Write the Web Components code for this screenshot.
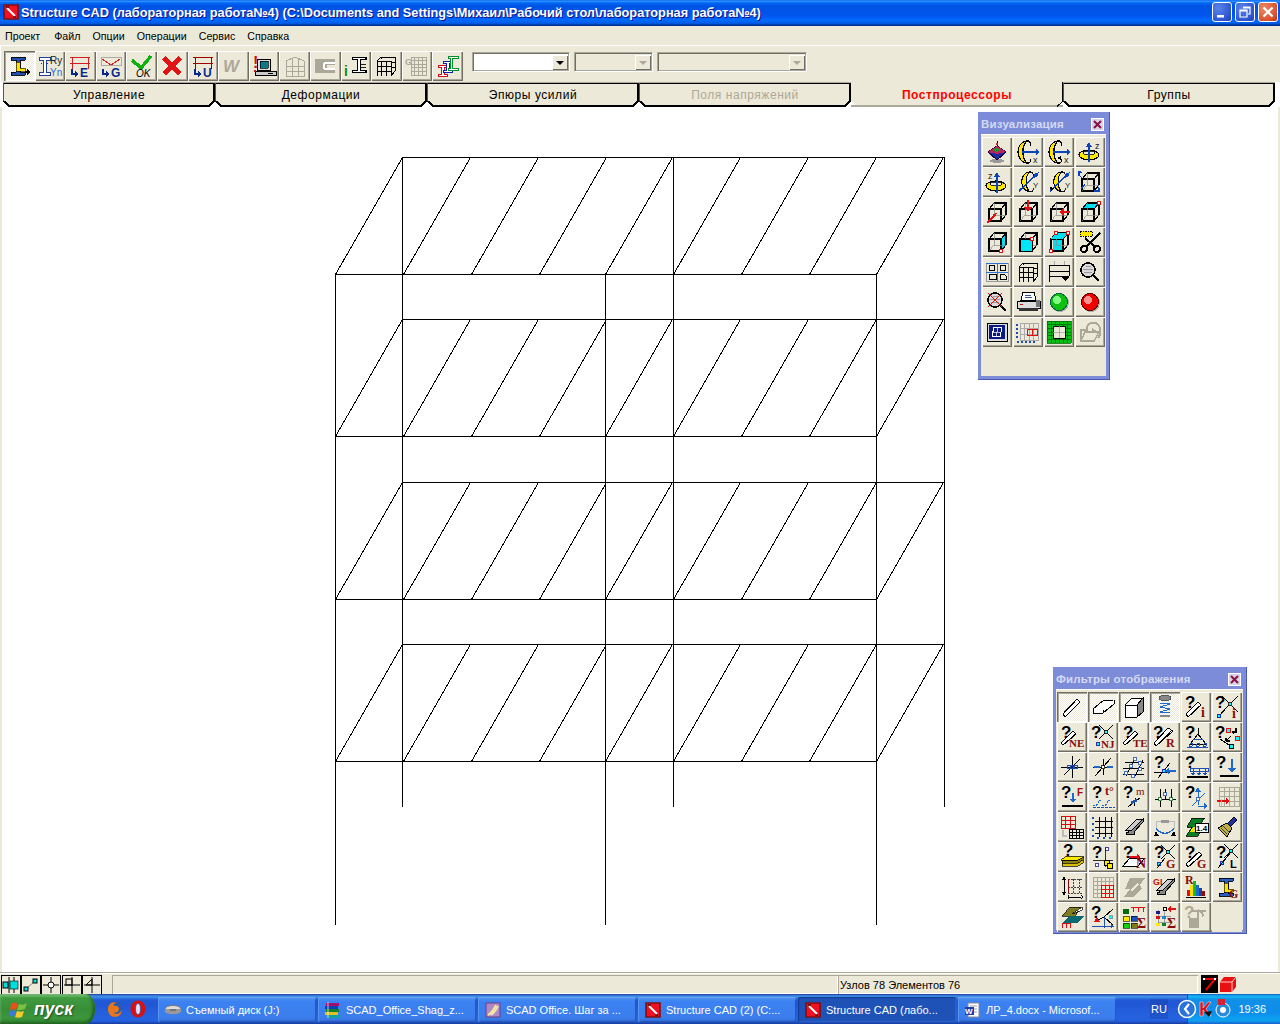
<!DOCTYPE html>
<html lang="ru">
<head>
<meta charset="utf-8">
<title>Structure CAD</title>
<style>
html,body{margin:0;padding:0;background:#ECE9D8;}
body{font-family:"Liberation Sans",Arial,sans-serif;}
</style>
</head>
<body>
<xp-app>
  <xp-titlebar text="Structure CAD (лабораторная работа№4) (C:\Documents and Settings\Михаил\Рабочий стол\лабораторная работа№4)"></xp-titlebar>
  <xp-menubar><span>Проект</span><span>Файл</span><span>Опции</span><span>Операции</span><span>Сервис</span><span>Справка</span></xp-menubar>
  <cad-toolbar>
    <tool-btn icon="t1" pressed></tool-btn><tool-btn icon="t2"></tool-btn><tool-btn icon="t3"></tool-btn><tool-btn icon="t4"></tool-btn><tool-btn icon="t5"></tool-btn><tool-btn icon="t6"></tool-btn><tool-btn icon="t7"></tool-btn><tool-btn icon="t8"></tool-btn><tool-btn icon="t9"></tool-btn><tool-btn icon="t10"></tool-btn><tool-btn icon="t11"></tool-btn><tool-btn icon="t12"></tool-btn><tool-btn icon="t13"></tool-btn><tool-btn icon="t14"></tool-btn><tool-btn icon="t15"></tool-btn>
    <cad-combo w="98" active></cad-combo><cad-combo w="79"></cad-combo><cad-combo w="150"></cad-combo>
  </cad-toolbar>
  <cad-tabs>
    <cad-tab>Управление</cad-tab><cad-tab>Деформации</cad-tab><cad-tab>Эпюры усилий</cad-tab><cad-tab disabled>Поля напряжений</cad-tab><cad-tab active>Постпроцессоры</cad-tab><cad-tab>Группы</cad-tab>
  </cad-tabs>
  <cad-canvas>
    <float-panel heading="Визуализация" cols="4" x="978" y="5" w="132" h="268" icons="v1 v2 v3 v4 v5 v6 v7 v8 v9 v10 v11 v12 v13 v14 v15 v16 v17 v18 v19 v20 v21 v22 v23 v24 v25 v26 v27 v28"></float-panel>
    <float-panel heading="Фильтры отображения" cols="6" x="1053" y="560" w="194" h="267" pressed="4" icons="f1 f2 f3 f4 f5 f6 f7 f8 f9 f10 f11 f12 f13 f14 f15 f16 f17 f18 f19 f20 f21 f22 f23 f24 f25 f26 f27 f28 f29 f30 f31 f32 f33 f34 f35 f36 f37 f38 f39 f40 f41 f42 f43 f44 f45 f46 f47 -"></float-panel>
  </cad-canvas>
  <cad-status text="Узлов 78 Элементов 76"></cad-status>
  <xp-taskbar>
    <task-btn icon="disk">Съемный диск (J:)</task-btn>
    <task-btn icon="rar">SCAD_Office_Shag_z...</task-btn>
    <task-btn icon="book">SCAD Office. Шаг за ...</task-btn>
    <task-btn icon="scad">Structure CAD (2) (C:...</task-btn>
    <task-btn icon="scad" active>Structure CAD (лабо...</task-btn>
    <task-btn icon="word">ЛР_4.docx - Microsof...</task-btn>
  </xp-taskbar>
</xp-app>
<script>
const FF='font-family="Liberation Sans,Arial,sans-serif"',SF='font-family="Liberation Serif,serif"';
const tx=(s,x,y,z=9,c='#000',w=700,extra='')=>`<text x="${x}" y="${y}" font-size="${c==='#8a0c0c'?z+1:z}" font-weight="${w}" fill="${c}" ${c==='#8a0c0c'?SF:FF} ${extra}>${s}</text>`;
const Q=(x=1,y=13,z=17)=>`<text x="${x}" y="${y}" font-size="${z}" font-weight="700" fill="#000" stroke="#fff" stroke-width=".5" paint-order="stroke" ${FF}>?</text>`;
const rod=(d='M7 21l-2-2L18 6l2 2z')=>`<path d="${d}" fill="#fff" stroke="#000" stroke-width="1.2"/>`;
const cross=(x,y,r=6,c='#0ff')=>`<path d="M${x-r} ${y-r}L${x+r} ${y+r}M${x+r} ${y-r}L${x-r} ${y+r}" stroke="#000"/><rect x="${x-1.5}" y="${y-1.5}" width="3" height="3" fill="${c}" stroke="#000" stroke-width=".8"/>`;
const node=(x,y,c='#0ff',s='#00a')=>`<rect x="${x-1.5}" y="${y-1.5}" width="3" height="3" fill="${c}" stroke="${s}" stroke-width=".8"/>`;
const cube=(body='')=>`<path d="M4 9h12v12H4zM4 9l5-6h12v12l-5 6M16 9l5-6" fill="none" stroke="#000" stroke-width="1.1"/><path d="M9 3v12H21M9 15l-5 6" fill="none" stroke="#888" stroke-width=".7"/>${body}`;
const ibeam=(c='#1c4fb0',y='#ffe000')=>`<path d="M4 3h14v3h-5v12h5v3H4v-3h5V6H4z" fill="${c}" stroke="#000" stroke-width=".9"/><path d="M9 8h4v6h5v3H9z" fill="${y}" stroke="#000" stroke-width=".6"/>`;
const arrow=(d,c='#0a46b8',w=1.6)=>`<path d="${d}" fill="none" stroke="${c}" stroke-width="${w}"/>`;
const grid=(x,y,w,h,nx,ny,c='#000',sw=1)=>{let d=`M${x} ${y}h${w}v${h}h${-w}z`;for(let i=1;i<nx;i++)d+=`M${x+w*i/nx} ${y}v${h}`;for(let i=1;i<ny;i++)d+=`M${x} ${y+h*i/ny}h${w}`;return `<path d="${d}" fill="none" stroke="${c}" stroke-width="${sw}"/>`;};
const rot=(tr='')=>`<g transform="${tr}"><path d="M12 1C0 2 0 22 12 23C7 19 6 6 12 1z" fill="#ffe800" stroke="#000" stroke-width="1.200"/><path d="M12 1c3 0 4 2 4 5M12 23c3 0 4-2 4-4" fill="none" stroke="#000"/></g>`;
const ringz=`<ellipse cx="11" cy="15" rx="10" ry="5" fill="#ffe800" stroke="#000" stroke-width="1.200"/><ellipse cx="11" cy="13" rx="6" ry="2" fill="#ece9d8" stroke="#000" stroke-width=".8"/>`;
const frame3d=`<path d="M3 7h14v15M3 7v15M7.500 7v15M12 7v15M3 12h14M3 17h14M3 7l4-4h14v14l-4 5M7 3v2M21 8h-4M21 13h-4" fill="none" stroke="#000" stroke-width="1"/>`;
const glass=(b='')=>`<circle cx="10" cy="10" r="7" fill="#d9d9d9" stroke="#000" stroke-width="1.600"/><path d="M5 9h10M6 12h8M8 6h5" stroke="#999"/><path d="M15 15l6 6" stroke="#000" stroke-width="2.400"/>${b}`;
const ball=(a,b,c)=>`<ellipse cx="13" cy="13" rx="9" ry="9" fill="#888" opacity=".6"/><circle cx="12" cy="12" r="8.500" fill="${b}" stroke="${c}" stroke-width="1"/><circle cx="10" cy="10" r="4" fill="${a}"/>`;
const beam3=`<path d="M4 15l11-11h6l-11 11z" fill="#ccc" stroke="#000"/><path d="M10 15l11-11v3L12 17v2H4v-2h2v-2z" fill="#888" stroke="#000"/>`;
const zshape=(a,b)=>`<path d="M8 3h13l-6 7h6l-7 11H2l6-9H3z" fill="${a}" stroke="#000" stroke-width=".8"/><path d="M9 12h9l-3 5H6z" fill="${b}"/>`;
const dis='#aca899';
const ICONS={
t1:ibeam()+`<path d="M18 18h4" stroke="#000" stroke-width="1.500"/><path d="M20 15l4 3-4 3z"/>`,
t2:`<path d="M1 3h11v3H8v12h4v3H1v-3h4V6H1z" fill="#fff" stroke="#1c3fa0" stroke-width="1"/><path d="M3 9h1M9 9h1" stroke="#1c3fa0"/>`+tx('Ry',12,10,10,'#222',400)+tx('Yn',12,22,10,'#2a6de0',400),
t3:`<path d="M2 3h20M2 9h20M4 3v12M20 3v12" stroke="#d02020" stroke-width="1" fill="none"/>`+arrow('M4 15v5h5','#0a2a8a',2)+`<path d="M7 17l4 3-4 3z" fill="#0a2a8a"/>`+tx('E',12,23,12,'#0a2a8a'),
t4:`<path d="M2 3h20v8H2z" fill="#ece9d8" stroke="#aaa"/><path d="M3 5l9 6 9-6" fill="none" stroke="#d02020"/>`+arrow('M4 15v5h5','#0a2a8a',2)+`<path d="M7 17l4 3-4 3z" fill="#0a2a8a"/>`+tx('G',12,23,12,'#0a2a8a'),
t5:`<path d="M2 6l9 8 10-12" fill="none" stroke="#10b010" stroke-width="3.400"/>`+tx('OK',6,23,10,'#000',400,'font-style="italic"'),
t6:`<path d="M4 4l16 16M20 4L4 20" stroke="#e01414" stroke-width="4.400"/>`,
t7:`<path d="M2 3h20M2 9h20M4 3v12M20 3v12" stroke="#900" stroke-width="1" fill="none"/>`+arrow('M4 15v5h5','#0a2a8a',2)+`<path d="M7 17l4 3-4 3z" fill="#0a2a8a"/>`+tx('U',12,23,12,'#0a2a8a'),
t8:tx('W',2,18,17,dis,700,'font-style="italic"'),
t9:tx('!',1,14,16,'#d01010')+`<path d="M5 5h13v11H5z" fill="#ddd" stroke="#000"/><path d="M8 7h8v7H8z" fill="#087a8a" stroke="#000" stroke-width=".7"/><path d="M3 17h21v4H3z" fill="#ccc" stroke="#000"/><path d="M16 19h5" stroke="#000"/><circle cx="3" cy="17" r="1.500" fill="#d01010"/>`,
t10:`<path d="M3 7l9-4 9 4v15H3zM3 12h18M3 17h18M9 4v18M15 4v18" fill="none" stroke="${dis}" stroke-width="1"/>`,
t11:`<path d="M2 5h20v14H2z" fill="${dis}"/><path d="M11 9h11M11 15h11M11 9v6" stroke="#fff" fill="none" stroke-width="2"/><path d="M14 11h8v3h-8z" fill="#ece9d8"/>`,
t12:tx('i',0,22,14,'#0a9010')+`<g transform="translate(5 0) scale(.85)"><path d="M4 4h16v3h-6v12h6v3H4v-3h6V7H4z" fill="#fff" stroke="#000" stroke-width="1.200"/><path d="M14 12h6M14 16h6" stroke="#000"/></g>`,
t13:frame3d,
t14:tx('G',0,11,9,dis)+grid(6,3,15,18,4,5,dis,1),
t15:`<path d="M2 11h9v2H8v7h3v2H2v-2h3v-7H2z" fill="#fff" stroke="#d01020" stroke-width="1"/><path d="M7 7h9v2h-3v7h3v2H7v-2h3V9H7z" fill="#fff" stroke="#1020b0" stroke-width="1"/><path d="M12 2h10v2h-6v10h6v2H12v-2h2V4h-2z" fill="#fff" stroke="#009030" stroke-width="1"/>`,
v1:`<ellipse cx="12" cy="21" rx="7" ry="2" fill="#999"/><path d="M12 1v6" stroke="#000"/><path d="M3 12l9-6 9 6-9 8z" fill="#1c2aa0" stroke="#203"/><path d="M3 12l9-6 9 6-9 2z" fill="#c02060"/><path d="M8 10l4-2 4 2-4 2z" fill="#10a020"/><circle cx="12" cy="4" r="1.500" fill="#d02020"/>`,
v2:rot('translate(-1 0)')+arrow('M6 12h17')+`<path d="M20 9l4 3-4 3z" fill="#0a46b8"/>`+tx('x',17,23,9,'#222',400),
v3:rot('translate(-1 0)')+arrow('M6 12h17')+`<path d="M20 9l4 3-4 3z" fill="#0a46b8"/>`+tx('x',17,23,9,'#222',400)+`<path d="M10 18l4 2v-4z"/>`,
v4:ringz+arrow('M11 22V5')+`<path d="M8 7l3-5 3 5z" fill="#0a46b8"/>`+tx('z',17,9,9,'#222',400),
v5:`<g transform="translate(0 1)">${ringz}</g>`+arrow('M12 23V5')+`<path d="M9 7l3-5 3 5z" fill="#0a46b8"/>`+tx('z',3,9,9,'#222',400),
v6:rot('translate(3 1) scale(.9)')+arrow('M3 21L20 5')+`<path d="M23 2l-2 6-4-4z" fill="#0a46b8"/>`+tx('Y',17,18,8,'#222',400),
v7:rot('translate(4 1) scale(.9)')+arrow('M3 21L20 5')+`<path d="M23 2l-2 6-4-4z" fill="#0a46b8"/>`+tx('Y',18,18,8,'#222',400)+`<path d="M3 17l4 1-3 3z"/>`,
v8:cube(arrow('M1 5l3 3M1 1v5','#0a46b8',1.2)+arrow('M7 14l-4 5M16 21h6','#0a46b8',1.2)+`<path d="M2 0l2 3H0zM23 19l-3-2v4z" fill="#0a46b8"/>`),
v9:cube(`<path d="M2 23l8-8" stroke="#e01010" stroke-width="1.600"/><path d="M12 13l-5 1 3 3z" fill="#e01010"/>`),
v10:cube(`<path d="M12 0v9" stroke="#e01010" stroke-width="1.800"/><path d="M8 7h8l-4 5z" fill="#e01010"/>`),
v11:cube(`<path d="M23 12h-8" stroke="#e01010" stroke-width="1.800"/><path d="M17 8v8l-5-4z" fill="#e01010"/>`),
v12:`<path d="M4 9l5-6h12l-5 6z" fill="#00e0f0"/>`+cube(`<rect x="19.500" y="1.500" width="3" height="3" fill="#fff" stroke="#e01010"/>`),
v13:`<path d="M16 9l5-6v12l-5 6z" fill="#00e0f0"/>`+cube(`<rect x="14.500" y="19.500" width="3" height="3" fill="#fff" stroke="#e01010"/>`),
v14:`<path d="M4 9h12v12H4z" fill="#00e0f0"/>`+cube(`<path d="M4 9h12v12H4z" fill="#00e8f8" stroke="#000" stroke-width="1"/><rect x="14.500" y="7.500" width="3" height="3" fill="#fff" stroke="#e01010"/>`),
v15:`<path d="M6 8L11 3h10l-6 6v12H6z" fill="#00e0f0"/>`+cube(`<path d="M9 3h12l-5 6H4z" fill="#00e0f0"/><rect x="7.500" y="1.500" width="3" height="3" fill="#fff" stroke="#e01010"/><rect x="19.500" y="1.500" width="3" height="3" fill="#fff" stroke="#e01010"/><rect x="2.500" y="19.500" width="3" height="3" fill="#fff" stroke="#e01010"/>`),
v16:`<path d="M2 1h12v5H2z" fill="#ffe800" stroke="#000" stroke-dasharray="1.500 1"/><path d="M22 3L8 17M7 8l10 9" stroke="#000" stroke-width="2"/><circle cx="6" cy="19" r="3" fill="none" stroke="#000" stroke-width="2"/><circle cx="19" cy="19" r="3" fill="none" stroke="#000" stroke-width="2"/>`,
v17:`<path d="M1 3h22v18H1z" fill="none" stroke="#999"/><path d="M1 3h22M12 3v18M1 12h22" stroke="#3070d0" stroke-width="1"/><path d="M4 5h5v5H4zM15 5h5v5h-5zM4 14h7v5H4zM15 14h4l2 2v3h-6z" fill="none" stroke="#000"/>`,
v18:frame3d,
v19:`<path d="M7 1v4M17 1v4" stroke="#aaa"/><path d="M2 5h20v6H2zM2 16h20M2 5v17M22 5v11" fill="none" stroke="#000" stroke-width="1"/><path d="M14 17h8l-4 4z"/>`,
v20:glass(),
v21:glass(`<path d="M3 3l14 14M17 3L3 17" stroke="#e01010" stroke-width="1.300"/>`),
v22:`<path d="M7 2h11l2 8H5z" fill="#fff" stroke="#000"/><path d="M9 5h6M9 7h7" stroke="#3050a0"/><path d="M1 11h23v7H1z" fill="#ddd" stroke="#000"/><path d="M20 10h4v7h-4z" fill="#777"/><path d="M3 18h19v3H3z" fill="#333"/><path d="M4 14h3" stroke="#d01010"/>`,
v23:ball('#80ff80','#10c010','#064'),
v24:ball('#ff9090','#ee0000','#600'),
v25:`<path d="M2 3h20v18H2z" fill="#ddd" stroke="#000" stroke-width="1"/><path d="M4 5h16v14H4z" fill="#0a1a80"/><path d="M7 16l2-9 8 1-2 9z" fill="none" stroke="#fff"/><path d="M8 12l8 1M13 7l-2 9" stroke="#fff" stroke-width=".7"/>`,
v26:grid(4,3,18,17,4,3,'#aaa')+`<path d="M11 9h10v6H11z M16 9v6" fill="none" stroke="#e01010" stroke-width="1"/>`+`<path d="M1 4v16M1 22h20" stroke="#1c4fb0" stroke-dasharray="1.500 2.500" stroke-width="1.500"/>`,
v27:`<path d="M0 1h24v22H0z" fill="#00c010"/>`+grid(0,1,24,22,6,6,'#006a0a',.8)+`<path d="M6 6h12v12H6z" fill="#ece9d8" stroke="#000" stroke-width="1"/><path d="M12 6v12M6 12h12" stroke="#999" stroke-width=".7"/>`,
v28:`<path d="M3 21V10h6V8c0-7 13-7 13 1v6l-2 3" fill="none" stroke="${dis}" stroke-width="2"/><path d="M3 21l4-9h14l-5 9z" fill="#ece9d8" stroke="${dis}" stroke-width="1.500"/><path d="M14 9l4 3" stroke="${dis}" stroke-width="2"/>`,
f1:rod('M5 22l-2-3L17 4l3 3z')+`<path d="M3 19l2 3" stroke="#000"/>`,
f2:`<path d="M2 14L13 5h10L12 15H2z" fill="#fff" stroke="#000" stroke-width="1"/><path d="M2 14v4h10l11-9V5M12 15v3" fill="#fff" stroke="#000" stroke-width="1"/>`,
f3:`<path d="M3 10L10 3h11v14l-6 5H3z" fill="#fff" stroke="#000" stroke-width="1"/><path d="M15 10l6-7v14l-6 5z" fill="#888" stroke="#000"/><path d="M3 10h12v12" fill="none" stroke="#000" stroke-width="1"/>`,
f4:`<ellipse cx="12" cy="3" rx="6" ry="2.500" fill="#888" stroke="#555"/><path d="M7 8l10 1-10 3 10 2-10 3 10 1" fill="none" stroke="#1c6ad0" stroke-width="1"/><path d="M7 21h10" stroke="#888" stroke-width="2"/>`,
f5:Q()+rod('M4 22l-2-3L14 7l3 3z')+tx('i',17,22,13,'#8a0c0c'),
f6:Q(0)+cross(15,9,8)+`<path d="M5 20l7-8" stroke="#000"/>`+node(4,21)+tx('i',17,23,13,'#8a0c0c'),
f7:Q()+rod('M3 20l-2-2L13 6l3 3z')+tx('NE',9,22,10,'#8a0c0c'),
f8:Q(0)+cross(15,7,7)+node(7,19)+tx('NJ',10,23,10,'#8a0c0c'),
f9:Q()+rod('M3 20l-2-2L13 6l3 3z')+tx('TE',11,22,10,'#8a0c0c'),
f10:Q(0)+`<path d="M3 21l-2-3L15 3l5 3z" fill="#fff" stroke="#000" stroke-width="1"/><path d="M3 21l15-15" stroke="#000"/>`+tx('R',13,22,11,'#8a0c0c'),
f11:Q()+`<path d="M14 3v8M14 9l-8 10h16z" fill="none" stroke="#000"/>`+`<path d="M9 14h10" stroke="#1c4fb0"/><path d="M3 22h21" stroke="#1c4fb0"/>`+`<circle cx="7" cy="20" r="1.500" fill="none" stroke="#1c4fb0"/><circle cx="21" cy="20" r="1.500" fill="none" stroke="#1c4fb0"/><circle cx="14" cy="20" r="1.500" fill="none" stroke="#1c4fb0"/>`,
f12:Q(0)+`<rect x="11" y="3" width="4" height="4" fill="#0ff" stroke="#e01010"/><rect x="20" y="11" width="4" height="4" fill="#0ff" stroke="#e01010"/><rect x="14" y="19" width="4" height="4" fill="#0ff" stroke="#000"/><path d="M18 9l4-5M21 3v4h-4M12 15l4-4M11 16v-3M11 16h4" stroke="#000" fill="none" stroke-width="1.200"/><path d="M5 14l9 6" stroke="#000"/>`,
f13:`<path d="M1 12h22M12 1v22M4 20L20 4" stroke="#000"/>`+node(12,12,'#0a1a90','#1c4fb0')+`<rect x="7" y="10" width="3" height="3" fill="none" stroke="#1c4fb0"/><rect x="14" y="10" width="3" height="3" fill="none" stroke="#1c4fb0"/>`,
f14:`<path d="M2 12h20M4 21L20 3M12 4v16" stroke="#000"/><path d="M3 12h6M16 12h6" stroke="#1c6ad0" stroke-width="2.500"/>`+node(12,12,'#fff','#000'),
f15:`<path d="M3 7h19M1 13h21M1 19h21M4 21L12 5M13 21L21 5" stroke="#000" fill="none"/>`+node(13,4,'#fff','#1c4fb0')+node(18,8,'#fff','#1c4fb0')+node(9,11,'#fff','#1c4fb0')+node(18,14,'#fff','#1c4fb0')+node(4,18,'#fff','#1c4fb0')+node(11,21,'#fff','#1c4fb0'),
f16:Q()+`<path d="M1 17h16M5 23L17 8" stroke="#000"/>`+node(11,16)+arrow('M23 16h-9','#1c6ad0',2)+`<path d="M16 13v6l-4-3z" fill="#1c6ad0"/>`,
f17:Q()+`<path d="M6 13h18v3H6z" fill="none" stroke="#1c4fb0"/><path d="M9 14v5M15 14v5M21 14v5" stroke="#1c4fb0" stroke-width="1"/><path d="M7 18h4l-2 3zM13 18h4l-2 3zM19 18h4l-2 3z" fill="#1c4fb0"/><path d="M3 22h21" stroke="#000" stroke-width="2"/>`,
f18:Q()+arrow('M17 4v12','#1c6ad0',2)+`<path d="M13 13h8l-4 5z" fill="#1c6ad0"/><path d="M5 21h19" stroke="#000" stroke-width="2"/>`,
f19:Q()+arrow('M13 8v9','#1c6ad0',2)+`<path d="M10 14h6l-3 4z" fill="#1c6ad0"/>`+tx('F',17,11,10,'#a01010')+`<path d="M2 21h21" stroke="#000" stroke-width="2"/>`,
f20:Q()+tx('t°',14,10,11,'#8a0c0c')+`<path d="M2 21c6 0 4-4 8-6M11 21c6 0 4-4 8-6" stroke="#1c6ad0" fill="none" stroke-dasharray="2 1"/><path d="M2 22h22" stroke="#1c4fb0" stroke-dasharray="3 1"/>`,
f21:Q()+tx('m',14,10,10,'#8a0c0c',400)+`<path d="M6 22l12-9M14 13l-2 8" stroke="#000"/><path d="M9 18l6-3" stroke="#1c4fb0" stroke-width="3"/>`,
f22:`<path d="M7 4v18M18 4v18M2 14h21M12 4v10" stroke="#000"/>`+node(12,9,'#fff','#1c4fb0')+node(7,14,'#fff','#0a7a20')+node(18,14,'#fff','#0a7a20'),
f23:Q()+arrow('M8 21L21 8M14 7v13M14 21h9','#1c6ad0',1)+`<path d="M14 2l3 5h-6zM24 21l-4-3v6z" fill="#1c6ad0"/>`+node(14,14,'#fff','#1c4fb0'),
f24:grid(4,2,20,19,4,4,dis)+`<path d="M2 16h11" stroke="#e01010" stroke-width="1.500"/><path d="M11 13l4 3-4 3z" fill="#e01010"/><path d="M6 21v-7" stroke="#e8d000"/>`,
f25:grid(1,1,14,12,3,3,'#d01010',1)+`<path d="M3 15v6h4" stroke="#bbb" stroke-width="2.500" fill="none"/>`+grid(9,14,14,9,4,3,'#000',1),
f26:`<path d="M4 6h18M4 12h18M4 18h18M8 2v20M14 2v20M20 2v20" stroke="#000"/>`+`<path d="M2 2v20" stroke="#1c4fb0" stroke-dasharray="1.500 4.500" stroke-width="1.800"/><path d="M6 23h16" stroke="#1c4fb0" stroke-dasharray="2 4" stroke-width="1.500"/>`,
f27:beam3,
f28:`<path d="M3 6h18M3 6v8M21 6v8" stroke="#bbb" stroke-width="1" fill="none"/><path d="M8 6h8" stroke="#999" stroke-width="3"/><path d="M3 13c5 7 13 7 18 0" stroke="#1c6ad0" stroke-width="1.300" fill="none"/><path d="M1 21l2-5 3 5zM18 21l3-5 2 5z" fill="#000"/>`,
f29:zshape('#088020','#f0e000')+`<path d="M11 8h13v9H11z" fill="#fff" stroke="#000"/>`+tx('1.4',12,16,8,'#000',700),
f30:`<path d="M19 2l3 3-7 7-3-3z" fill="#2030a0" stroke="#000"/><path d="M12 8l5 5-5 9-9-9z" fill="#c0b040" stroke="#000"/><path d="M6 13l6 6M8 11l6 6" stroke="#444"/>`,
f31:Q(3,11)+`<path d="M2 15h16l5-3v3l-5 3H2z" fill="#908010" stroke="#000" stroke-width=".7"/><path d="M2 18h16l5-3v3l-5 3H2z" fill="#d8c000" stroke="#000" stroke-width=".7"/><path d="M6 11h14l4 1-6 3H1z" fill="#ffe800" stroke="#000" stroke-width=".7"/>`,
f32:Q(1)+`<path d="M2 15h20M14 2v20" stroke="#000" stroke-width=".8"/>`+node(16,4,'#fff','#1c1c90')+node(6,20,'#fff','#1c1c90')+`<rect x="13" y="15" width="5" height="5" fill="#ffe800" stroke="#000"/><rect x="16" y="18" width="5" height="5" fill="#ffe800" stroke="#000"/>`,
f33:Q(1)+`<path d="M1 21l7-8h15l-7 8z" fill="#fff" stroke="#000"/><path d="M7 12h11" stroke="#e01010" stroke-width="1.300"/><path d="M15 9v6l4-3z" fill="#e01010"/>`+tx('N',14,23,13,'#8a0c0c'),
f34:Q(1)+cross(15,7,7)+node(6,19)+`<path d="M4 23l8-10" stroke="#000"/>`+tx('G',13,23,11,'#8a0c0c'),
f35:Q(1)+rod('M4 22l-2-3L15 7l3 3z')+tx('G',13,23,11,'#8a0c0c'),
f36:Q(1)+cross(16,6,7)+node(7,18)+`<path d="M3 23l13-16" stroke="#000"/>`+tx('L',15,23,11,'#000'),
f37:`<path d="M8 4h15M8 12h15M8 18h15M13 4v14M19 4v14" stroke="#444" stroke-dasharray="2 1"/><path d="M8 4v14" stroke="#8a0c0c"/>`+arrow('M4 3v16','#000',1)+`<path d="M2 5l2-4 2 4zM2 17l2 4 2-4z"/><path d="M8 22h13M21 20l2 2-2 2M8 20v4" stroke="#000" fill="none"/>`,
f38:grid(2,2,20,20,5,5,dis)+grid(10,10,12,12,3,3,'#e01010',1),
f39:`<path d="M8 3h15l-5 7 2 4-9 8H2l6-8H3z" fill="${dis}"/><path d="M9 16l7-7" stroke="#ece9d8" stroke-width="2"/>`,
f40:tx('GL',0,10,9,'#c01010')+beam3,
f41:tx('R',1,9,11,'#8a0c0c')+`<path d="M2 22h20" stroke="#000" stroke-width="1"/><path d="M3 15h3v6H3z" fill="#e01010"/><path d="M6 10h3v11H6z" fill="#ffe000"/><path d="M9 6h3v15H9z" fill="#10c010"/><path d="M12 10h3v11h-3z" fill="#1c6ad0"/><path d="M15 13h3v8h-3z" fill="#1c3fa0"/><path d="M18 16h3v5h-3z" fill="#8a0c0c"/>`,
f42:ibeam('#2a60c0','#ffe000')+tx('G',14,23,11,'#8a0c0c'),
f43:`<path d="M2 11L10 2h12l-7 9z" fill="#807c20" stroke="#000" stroke-width=".7"/><path d="M10 11h14l-6 7H2z" fill="#086a70"/><path d="M12 9l10-7v3z" fill="#fff" stroke="#000" stroke-width=".7"/><path d="M2 18h8v5M2 18v5M6 18v5" stroke="#e01010" fill="none" stroke-width="1"/>`,
f44:Q(0)+`<path d="M3 17l10-5 9-8M13 12l9 8" stroke="#000" fill="none"/>`+node(20,12,'#0ff','#888')+`<path d="M3 17h6l-3-5z" fill="#e01010"/><path d="M1 21h22M13 12v11" stroke="#1c4fb0"/><path d="M20 19l3 2-3 2z" fill="#1c4fb0"/>`,
f45:`<rect x="1" y="4" width="6" height="5" fill="#0a6a0a"/><rect x="1" y="11" width="6" height="5" fill="#ffe800" stroke="#000" stroke-width=".6"/><rect x="1" y="18" width="6" height="5" fill="#10d010" stroke="#000" stroke-width=".6"/><rect x="9" y="11" width="6" height="5" fill="#1c4fc0" stroke="#000" stroke-width=".6"/><rect x="9" y="18" width="6" height="5" fill="#807c20" stroke="#000" stroke-width=".6"/><path d="M9 2h14M11 2v5M16 2v5M21 2v5" stroke="#e01010"/>`+tx('Σ',15,23,13,'#8a0c0c'),
f46:`<path d="M5 5v16M5 11h13M5 17h13M11 5v16" stroke="#888" stroke-width=".8"/><rect x="3" y="6" width="4" height="3" fill="#1c1c90"/><rect x="3" y="11" width="4" height="3" fill="#e01010"/><rect x="3" y="18" width="4" height="3" fill="#ffe800"/><rect x="9" y="11" width="4" height="3" fill="#1c8ad0"/><rect x="9" y="18" width="4" height="3" fill="#108030"/><circle cx="12" cy="4" r="2" fill="#fff" stroke="#000"/><path d="M23 4h-8" stroke="#e01010" stroke-width="2"/><path d="M18 1v6l-4-3z" fill="#e01010"/>`+tx('Σ',14,23,13,'#8a0c0c'),
f47:`<text x="0" y="13" font-size="17" font-weight="700" fill="${dis}" ${FF}>?</text>`+`<path d="M5 13h10v10H5z" fill="${dis}"/><path d="M14 23V5M7 6h15M14 5l6 5" stroke="${dis}" stroke-width="1.500" fill="none"/><path d="M18 7v5" stroke="${dis}"/>`,
disk:`<ellipse cx="8" cy="7" rx="8" ry="3.500" fill="#ddd" stroke="#777"/><path d="M0 7v3c2 3 14 3 16 0V7" fill="#999"/><path d="M5 8h6" stroke="#555"/>`,
rar:`<path d="M1 1h13v3H1z" fill="#a01070"/><path d="M0 4h13v3H0z" fill="#1040b0"/><path d="M1 7h13v3H1z" fill="#108030"/><path d="M0 10h13v3H0z" fill="#e0c020"/><path d="M2 13h12v3H2z" fill="#10a0a0"/><path d="M3 0v16" stroke="#fff" stroke-width=".7"/>`,
book:`<path d="M1 1h14v14H1z" fill="#b088c8" stroke="#6a4080"/><path d="M3 13C7 11 9 7 11 3M6 13c3-2 5-5 7-9" stroke="#f0e8a0" stroke-width="2" fill="none"/>`,
scad:`<path d="M1 1h14v14H1z" fill="#f01020" stroke="#801010" stroke-width="1.600"/><path d="M4 4l8 8" stroke="#fff" stroke-width="2"/><path d="M3 3h3M10 13h3" stroke="#000"/>`,
word:`<path d="M3 1h11v14H3z" fill="#fff" stroke="#889"/><path d="M5 4h7M5 7h7M5 10h7" stroke="#99b"/><path d="M0 5h9v8H0z" fill="#2040a0"/>`+tx('W',0,12,8,'#fff'),
};
const sv=(b,s=24,crisp=false)=>`<svg xmlns="http://www.w3.org/2000/svg" width="${s}" height="${s}" viewBox="0 0 ${s} ${s}" ${crisp?'shape-rendering="crispEdges" stroke-width="1"':''} style="display:block;overflow:visible">${b}</svg>`;
class Base extends HTMLElement{
  constructor(){super();this.attachShadow({mode:'open'});}
  html(h){this.shadowRoot.innerHTML=h;}
}
class XpApp extends Base{connectedCallback(){this.html(`<style>:host{display:flex;flex-direction:column;width:1280px;height:1024px;overflow:hidden;background:#ECE9D8;font-family:"Liberation Sans",Arial,sans-serif}</style><slot></slot>`);}}
class XpTitlebar extends Base{connectedCallback(){
  const t=this.getAttribute('text');
  this.html(`<style>
  :host{display:flex;align-items:center;height:26px;flex:none;box-sizing:border-box;padding:0 2px 2px 3px;color:#fff;
  background:linear-gradient(180deg,#0058EE 0,#3593FF 4%,#288EFF 6%,#127DFF 8%,#036FFC 10%,#0262EE 14%,#0057E5 20%,#0054E3 24%,#0055EB 56%,#005BF5 66%,#026AFE 76%,#0062EF 86%,#0052D6 92%,#0040AB 94%,#003092 100%)}
  .t{font:700 12.75px "Liberation Sans",Arial,sans-serif;margin-left:2px;flex:1;white-space:nowrap;text-shadow:1px 1px #0f1089}
  .b{width:20px;height:20px;box-sizing:border-box;border:1px solid #fff;border-radius:3px;margin-left:3px;background:radial-gradient(circle at 30% 30%,#5b83ea,#2f56d0 70%,#1f3fa8);display:flex;align-items:center;justify-content:center}
  .c{background:radial-gradient(circle at 30% 30%,#ea8a6a,#d8522c 70%,#b03010)}
  </style>
  ${sv(ICONS.scad,16)}<span class="t"></span>
  <div class="b">${sv('<path d="M3 11h7v2.500H3z" fill="#fff"/>',16)}</div>
  <div class="b">${sv('<path d="M6 3h7v7h-2M3 6h7v7H3z M3 7h7M6 4h7" fill="none" stroke="#fff" stroke-width="1.200"/>',16)}</div>
  <div class="b c">${sv('<path d="M3.500 3.500l9 9M12.500 3.500l-9 9" stroke="#fff" stroke-width="2.200"/>',16)}</div>`);
  this.shadowRoot.querySelector('.t').textContent=t;
}}
class XpMenubar extends Base{connectedCallback(){this.html(`<style>
  :host{display:flex;align-items:center;height:19px;flex:none;padding-left:5px;gap:12px;background:#ECE9D8;font:10.7px "Liberation Sans",Arial,sans-serif;color:#000;border-bottom:1px solid #fff}
  ::slotted(span){display:block}
  ::slotted(span:first-child){margin-right:2px}
  </style><slot></slot>`);}}
class CadToolbar extends Base{connectedCallback(){this.html(`<style>
  :host{display:flex;align-items:flex-start;height:36px;flex:none;box-sizing:border-box;padding:5px 0 0 3px;background:#ECE9D8;border-left:1px solid #fff}
  ::slotted(tool-btn){flex:0 0 30.6px}
  ::slotted(cad-combo){margin:1px 4px 0 0}
  ::slotted(cad-combo[active]){margin-left:9px}
  </style><slot></slot>`);}}
class ToolBtn extends Base{connectedCallback(){
  const ic=this.getAttribute('icon');
  this.html(`<style>
  :host{display:flex;align-items:center;justify-content:center;width:30px;height:30px;box-sizing:border-box;background:#ECE9D8;
  box-shadow:inset 1px 1px 0 #fff,inset -1px -1px 0 #716F64,inset -2px -2px 0 #ACA899}
  :host([pressed]){box-shadow:inset 1px 1px 0 #716F64,inset 2px 2px 0 #ACA899,inset -1px -1px 0 #fff;
  background:repeating-conic-gradient(#ECE9D8 0 25%,#fff 0 50%) 0 0/2px 2px}
  :host([flat]){box-shadow:none}
  </style>${ic&&ic!=='-'?sv(ICONS[ic]||'',24,true):''}`);
}}
class CadCombo extends Base{connectedCallback(){
  const a=this.hasAttribute('active'),w=this.getAttribute('w');
  this.html(`<style>
  :host{display:flex;width:${w}px;height:20px;flex:none;box-sizing:border-box;border:1px solid #fff;box-shadow:inset 1px 1px 0 #716F64,inset -1px -1px 0 #ACA899;background:${a?'#fff':'#ECE9D8'};padding:2px 1px 1px 2px;justify-content:flex-end;border-top-color:#ACA899;border-left-color:#ACA899}
  .a{width:16px;box-sizing:border-box;background:#ECE9D8;box-shadow:inset 1px 1px 0 #fff,inset -1px -1px 0 #716F64;display:flex;align-items:center;justify-content:center}
  .a i{width:0;height:0;border:4px solid transparent;border-top:4px solid ${a?'#000':'#ACA899'};border-bottom:0}
  </style><div class="a"><i></i></div>`);
}}
class CadTabs extends Base{connectedCallback(){this.html(`<style>:host{display:flex;height:25px;flex:none;padding-left:3px;background:#fff}</style><slot></slot>`);}}
class CadTab extends Base{connectedCallback(){
  const act=this.hasAttribute('active'),dis_=this.hasAttribute('disabled');
  const bd=act?`<path d="M0 0H212V19L206.500 24.500H5.500L0 19Z" fill="#ECE9D8"/><path d="M0 23.500H212" stroke="#ACA899" stroke-width="2"/><path d="M211.500 0V20" stroke="#000"/><path d="M206 24.500L212 19" stroke="#000"/>`
   :`<path d="M0 0H212V19L206.500 24.500H5.500L0 19Z" fill="#ECE9D8"/><path d="M0 .5H212" stroke="#ACA899"/><path d="M0 1.500H212" stroke="#000"/><path d="M211 1V19.500L206 24H6L0.500 19" fill="none" stroke="#000" stroke-width="2"/><path d="M.5 1V19" stroke="#555"/>`;
  this.html(`<style>
  :host{display:block;position:relative;width:212px;height:25px;flex:none}
  svg{position:absolute;left:0;top:0}
  .l{position:relative;display:flex;height:25px;box-sizing:border-box;padding-top:1px;align-items:center;justify-content:center;font:12px "Liberation Sans",Arial,sans-serif;letter-spacing:.55px;color:${dis_?'#ACA899':act?'#f00':'#000'};font-weight:${act?700:400}}
  </style><svg width="212" height="25" viewBox="0 0 212 25" shape-rendering="crispEdges">${bd}</svg><div class="l"><slot></slot></div>`);
}}
class CadCanvas extends Base{connectedCallback(){
  const F=[274,436,599,761].map(v=>v+.5),B=[157,319,482,644].map(v=>v+.5);
  const fx=[335,403,471,539,605,673,741,809,876],dx=67;
  let d='';
  for(const x of [335,605,876])d+=`M${x+.5} 274.5V925`;
  for(const x of [402,673,944])d+=`M${x+.5} 157.5V807`;
  F.forEach((y,i)=>{d+=`M335 ${y}H877`;});
  B.forEach((y,i)=>{d+=`M402 ${y}H945`;
    fx.forEach(x=>{d+=`M${x+.5} ${F[i]}L${x+dx+.5} ${y}`;});
  });
  this.html(`<style>
  :host{display:block;position:relative;flex:1;min-height:0;background:#fff;box-shadow:inset 2px 0 0 #ECE9D8,inset -2px 0 0 #ECE9D8}
  svg{position:absolute;left:0;top:0}
  </style><svg width="1280" height="865" viewBox="0 107 1280 865" shape-rendering="crispEdges"><path d="${d}" fill="none" stroke="#000"/></svg><slot></slot>`);
}}
class FloatPanel extends Base{connectedCallback(){
  const a=n=>this.getAttribute(n);
  const ics=a('icons').split(' '),pr=+(a('pressed')||0);
  const btns=ics.map((n,i)=>n==='-'?`<tool-btn icon="-" flat></tool-btn>`:`<tool-btn icon="${n}"${i<pr?' pressed':''}></tool-btn>`).join('');
  this.html(`<style>
  :host{display:block;position:absolute;left:${a('x')}px;top:${a('y')}px;width:${a('w')}px;height:${a('h')}px;box-sizing:border-box;background:#ECE9D8;border:1px solid #4A5AB0;border-width:0 1px 1px 0;box-shadow:inset 0 0 0 3px #7C8CD8;padding:3px}
  .h{display:flex;align-items:center;padding-bottom:1px;box-sizing:border-box;height:20px;background:#7C8CD8;color:#D4DAF4;font:700 11.5px "Liberation Sans",Arial,sans-serif;letter-spacing:.2px;justify-content:space-between;border-bottom:1px solid #fff}
  .x{width:13px;height:13px;box-sizing:border-box;margin-right:2px;background:#D8D4E8;border:1px solid #fff;display:flex;align-items:center;justify-content:center}
  .g{display:grid;grid-template-columns:repeat(${a('cols')},31px);grid-auto-rows:30px;padding:2px 0 0 1px;margin:0}
  </style><div class="h"><span></span><div class="x"><svg width="9" height="9" viewBox="0 0 9 9" style="display:block"><path d="M1 1l7 7M8 1L1 8" stroke="#8a1040" stroke-width="2"/></svg></div></div><div class="g">${btns}</div>`);
  this.shadowRoot.querySelector('span').textContent=a('heading');
}}
class CadStatus extends Base{connectedCallback(){
  const mini=[
   `<rect x="1" y="6" width="5" height="6" fill="#0dd" stroke="#000"/><path d="M7 1v16M12 1v16" stroke="#000"/><rect x="8" y="5" width="8" height="8" fill="#0dd" stroke="#000" stroke-width=".6"/>`,
   `<path d="M4 13L13 5" stroke="#888"/><rect x="2" y="11" width="4" height="4" fill="#0dd" stroke="#000"/><rect x="11" y="3" width="4" height="4" fill="#0dd" stroke="#000"/>`,
   `<path d="M1 9h16M9 1v16" stroke="#000"/><circle cx="9" cy="9" r="3" fill="#fff" stroke="#000"/>`,
   `<path d="M1 9h16M9 1v16" stroke="#000"/><rect x="3" y="3" width="6" height="6" fill="none" stroke="#000"/>`,
   `<path d="M1 9h16M9 1v16" stroke="#000"/><path d="M9 3L3 9h6z" fill="none" stroke="#000"/>`];
  this.html(`<style>
  :host{display:flex;align-items:stretch;height:22px;flex:none;box-sizing:border-box;background:#ECE9D8;border-top:1px solid #ACA899;padding-top:2px;font:11px "Liberation Sans",Arial,sans-serif;color:#000;box-shadow:inset 0 1px 0 #fff}
  .m{width:18px;height:18px;border:1px solid #000;background:#ECE9D8;flex:none}
  .ms{display:flex;width:112px;padding-left:1px;box-sizing:border-box}
  .ms .m{margin-right:.2px}
  .f{box-shadow:inset 1px 1px 0 #ACA899,inset -1px -1px 0 #fff;display:flex;align-items:center;padding-left:2px;box-sizing:border-box}
  .ic{display:flex;margin-left:3px;padding-bottom:1px}
  </style>
  <div class="ms">${mini.map(m=>`<div class="m">${sv(m,18)}</div>`).join('')}</div>
  <div class="f" style="width:726px"></div><div class="f" style="width:360px"><span></span></div>
  <div class="ic"><svg width="36" height="18" viewBox="0 0 36 18" style="display:block"><rect width="17" height="18"/><path d="M3 4h11L5 15" fill="none" stroke="#e00" stroke-width="2"/><rect x="2" y="3" width="2" height="2" fill="#fff"/><rect x="13" y="3" width="2" height="2" fill="#fff"/><path d="M19 7l4-5h12v10l-4 5H19z" fill="#e81010"/><path d="M31 7l4-5M19 7h12v10" stroke="#fff" fill="none" stroke-width=".8"/></svg></div>`);
  this.shadowRoot.querySelector('span').textContent=this.getAttribute('text');
}}
class XpTaskbar extends Base{connectedCallback(){this.html(`<style>
  :host{display:flex;align-items:stretch;height:30px;flex:none;background:linear-gradient(180deg,#1F2F86 0,#3165C4 3%,#3682E5 6%,#4490E6 10%,#3883E5 12%,#2B71E0 15%,#2663DA 18%,#235BD6 20%,#2258D5 23%,#2157D6 38%,#245DDB 54%,#2562DF 86%,#245FDC 89%,#2158D4 92%,#1D4EC0 95%,#1941A5 98%);font:11px "Liberation Sans",Arial,sans-serif;color:#fff}
  .s{width:95px;flex:none;box-sizing:border-box;border-radius:0 10px 10px 0/0 14px 14px 0;background:linear-gradient(180deg,#388E3C 0,#5FB35F 6%,#3F9A3F 14%,#388E38 50%,#3C963C 80%,#2B7A2B 100%);display:flex;align-items:center;padding:0 0 0 9px;gap:5px;box-shadow:inset -2px -1px 3px #1a5a1a,inset 0 1px 2px #9bd09b;font:italic 700 17.500px "Liberation Sans",Arial,sans-serif;text-shadow:1px 1px 2px #1a4a1a}
  .q{width:63px;flex:none;display:flex;align-items:center;padding-left:12px;gap:7px;box-sizing:border-box}
  .tasks{display:flex;flex:none;gap:2px;width:985px;box-sizing:border-box;padding:3px 0 2px}
  ::slotted(task-btn){flex:0 0 158px}
  .lang{width:35px;flex:none;box-sizing:border-box;display:flex;align-items:center;justify-content:flex-start;padding-left:7px;font-size:11px}
  .lang span{background:rgba(10,30,110,.18);padding:4px 1px}
  .tray{flex:1;display:flex;align-items:center;box-sizing:border-box;margin-left:9px;background:linear-gradient(180deg,#0C59B9 0,#139EE9 5%,#18B5F2 10%,#139BEB 14%,#1290E8 19%,#0D8DEA 63%,#0D9FF1 81%,#0F9EED 88%,#119BE9 91%,#1380DE 94%,#1564D0 100%);box-shadow:inset 1px 0 0 #0a4fa8}
  .tray svg{margin-left:-10px}
  .tray .clk{margin-left:auto;padding-right:14px}
  </style>
  <div class="s"><svg width="20" height="19" viewBox="0 0 20 19" style="display:block"><path d="M2 4c3-2 5-1 7 0l-2 6c-2-1-4-1-6 0z" fill="#e8501c"/><path d="M10 4c3 1 5 1 8-1l-2 6c-3 1-5 1-8 1z" fill="#7bc142"/><path d="M1 11c2-1 4-1 6 0l-2 6c-2-1-3-1-6 0z" fill="#3a7ad8"/><path d="M8 11c3 1 5 1 7 0l-2 6c-2 1-5 1-7 0z" fill="#f8c82c"/></svg><span>пуск</span></div>
  <div class="q"><svg width="16" height="16" viewBox="0 0 16 16" style="display:block"><circle cx="8" cy="8" r="7.500" fill="#2a5aa8"/><path d="M1 8c0-5 5-8 9-6-3 0-4 2-3 3 2-1 5 0 5 3s-4 5-6 3c3 4 8 1 9-3 0 5-3 8-7 8S1 13 1 8z" fill="#e8761c"/></svg><svg width="16" height="18" viewBox="0 0 16 18" style="display:block"><ellipse cx="8" cy="9" rx="7.500" ry="8.500" fill="#d81010"/><ellipse cx="8" cy="9" rx="3" ry="6" fill="#5a5a9c"/><ellipse cx="8" cy="9" rx="2" ry="5" fill="#e0e0ff"/></svg></div>
  <div class="tasks"><slot></slot></div>
  <div class="lang"><span>RU</span></div>
  <div class="tray"><svg width="56" height="22" viewBox="0 0 56 22" style="display:block;flex:none"><circle cx="10" cy="11" r="8.500" fill="#2a72dc" stroke="#fff" stroke-width="1.500"/><path d="M12 6l-4 5 4 5" fill="none" stroke="#fff" stroke-width="2.200"/><path d="M23 4h3v6l5-6h3l-5 7 5 7h-3l-5-6v6h-3z" fill="#d81020" stroke="#fff" stroke-width=".5"/><path d="M27 14l5 5 3-6z" fill="#111"/><circle cx="46" cy="12" r="7" fill="#2a8ad8" stroke="#fff"/><circle cx="46" cy="12" r="3" fill="#fff"/><rect x="41" y="1" width="7" height="6" fill="#d82030"/></svg><span class="clk">19:36</span></div>`);}}
class TaskBtn extends Base{connectedCallback(){
  const ic=this.getAttribute('icon');
  this.html(`<style>
  :host{display:flex;align-items:center;box-sizing:border-box;width:158px;height:25px;border-radius:2px;padding-left:7px;gap:5px;background:linear-gradient(180deg,#4F94EC,#3C81F3 20%,#3B7DEA 85%,#2E68D0);box-shadow:inset 0 1px 0 #6fa8f0,inset 1px 0 0 #5a96ea,inset -1px -1px 0 #2558b8;color:#fff;font:11px "Liberation Sans",Arial,sans-serif;white-space:nowrap;overflow:hidden}
  :host([active]){background:#1E52B7;box-shadow:inset 1px 1px 1px #123a90,inset -1px -1px 0 #2a62c8}
  </style>${sv(ICONS[ic]||'',16)}<span><slot></slot></span>`);
}}
[['xp-app',XpApp],['xp-titlebar',XpTitlebar],['xp-menubar',XpMenubar],['cad-toolbar',CadToolbar],['tool-btn',ToolBtn],['cad-combo',CadCombo],['cad-tabs',CadTabs],['cad-tab',CadTab],['cad-canvas',CadCanvas],['float-panel',FloatPanel],['cad-status',CadStatus],['xp-taskbar',XpTaskbar],['task-btn',TaskBtn]].forEach(([n,c])=>customElements.define(n,c));
</script>
</body>
</html>
